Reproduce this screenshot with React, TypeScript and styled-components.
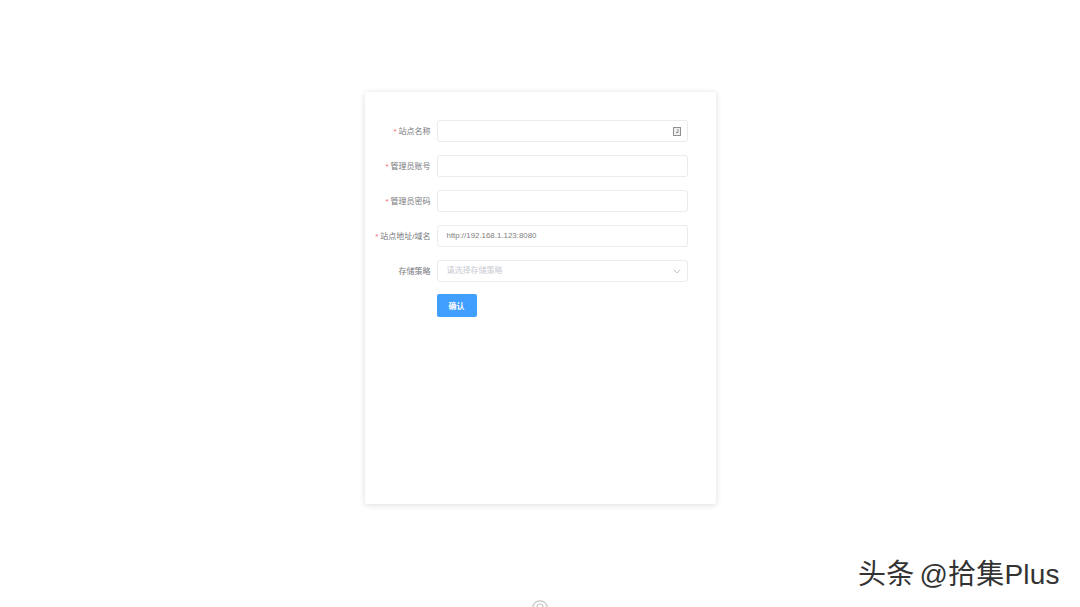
import { FC } from "react";
import styled, { createGlobalStyle } from "styled-components";

const GlobalStyle = createGlobalStyle`
  html, body {
    margin: 0;
    height: 100%;
    background: #fff;
    overflow: hidden;
    font-family: "Liberation Sans", "Noto Sans CJK SC", sans-serif;
  }
`;

type Field = {
  label: string;
  required?: boolean;
  value?: string;
  placeholder?: string;
  icon?: "card" | "chevron";
};

const fields: Field[] = [
  { label: "站点名称", required: true, icon: "card" },
  { label: "管理员账号", required: true },
  { label: "管理员密码", required: true },
  { label: "站点地址/域名", required: true, value: "http://192.168.1.123:8080" },
  { label: "存储策略", placeholder: "请选择存储策略", icon: "chevron" }
];

const App: FC = () => (
  <Page>
    <GlobalStyle />
    <Card>
      {fields.map(field => (
        <Row key={field.label}>
          <Label>
            {field.required && <Star>*</Star>}
            {field.label}
          </Label>
          <Control>
            {field.value && <Value>{field.value}</Value>}
            {field.placeholder && <Placeholder>{field.placeholder}</Placeholder>}
            {field.icon && (
              <IconSlot>{field.icon === "card" ? <CardIcon /> : <ChevronIcon />}</IconSlot>
            )}
          </Control>
        </Row>
      ))}
      <Actions>
        <Submit>确认</Submit>
      </Actions>
    </Card>
    <FooterMark>
      <svg width="16" height="16" viewBox="0 0 16 16" fill="none" stroke="#c4c4c4" strokeWidth="1.2">
        <circle cx="8" cy="8" r="7.2" />
        <circle cx="8" cy="7" r="3" />
      </svg>
    </FooterMark>
    <Watermark>头条 @拾集Plus</Watermark>
  </Page>
);

export default App;

const CardIcon: FC = () => (
  <svg width="8" height="9" viewBox="0 0 8 9" fill="none" stroke="#909090" strokeWidth="1">
    <rect x="0.5" y="0.5" width="7" height="8" fill="#eee" />
    <path d="M5 2v3.5H3" />
  </svg>
);

const ChevronIcon: FC = () => (
  <svg width="8" height="5" viewBox="0 0 8 5" fill="none" stroke="#c0c4cc" strokeWidth="1">
    <path d="M0.7 0.7L4 4L7.3 0.7" />
  </svg>
);

const Page = styled.div`
  position: relative;
  height: 607px;
  padding-top: 92px;
  box-sizing: border-box;
  overflow: hidden;
`;

const Card = styled.div`
  box-sizing: border-box;
  width: 351px;
  height: 412px;
  margin: 0 auto;
  padding: 28px 28px 0 0;
  background: #fff;
  border-radius: 2px;
  box-shadow: 0 1px 6px rgba(0, 0, 0, 0.14);
`;

const Row = styled.div`
  display: flex;
  align-items: center;
  height: 22px;
  margin-bottom: 13px;
`;

const Label = styled.div`
  width: 72px;
  flex-shrink: 0;
  padding: 0 6px 2px 0;
  box-sizing: border-box;
  text-align: right;
  font-size: 8px;
  white-space: nowrap;
  color: #77797d;
`;

const Star = styled.span`
  color: #f56c6c;
  margin-right: 2px;
`;

const Control = styled.div`
  flex: 1;
  height: 100%;
  box-sizing: border-box;
  display: flex;
  align-items: center;
  padding: 0 6px 0 9px;
  border: 1px solid #e9ebf0;
  border-radius: 3px;
`;

const IconSlot = styled.span`
  display: flex;
  margin-left: auto;
`;

const Value = styled.span`
  font-size: 7.9px;
  line-height: 20px;
  color: #808080;
`;

const Placeholder = styled.span`
  font-size: 8px;
  line-height: 20px;
  color: #c8cbd2;
`;

const Actions = styled.div`
  margin-top: -1px;
  padding-left: 72px;
`;

const Submit = styled.button`
  display: block;
  width: 40px;
  height: 23px;
  padding: 0;
  border: 0;
  border-radius: 2px;
  background: #409eff;
  color: #fff;
  font-family: inherit;
  font-size: 8px;
  font-weight: 700;
`;

const FooterMark = styled.div`
  position: absolute;
  left: 532px;
  top: 600px;
`;

const Watermark = styled.div`
  position: absolute;
  left: 858px;
  top: 558px;
  font-size: 28px;
  line-height: 34px;
  letter-spacing: 0.2px;
  word-spacing: -3px;
  white-space: nowrap;
  color: #333;
`;
